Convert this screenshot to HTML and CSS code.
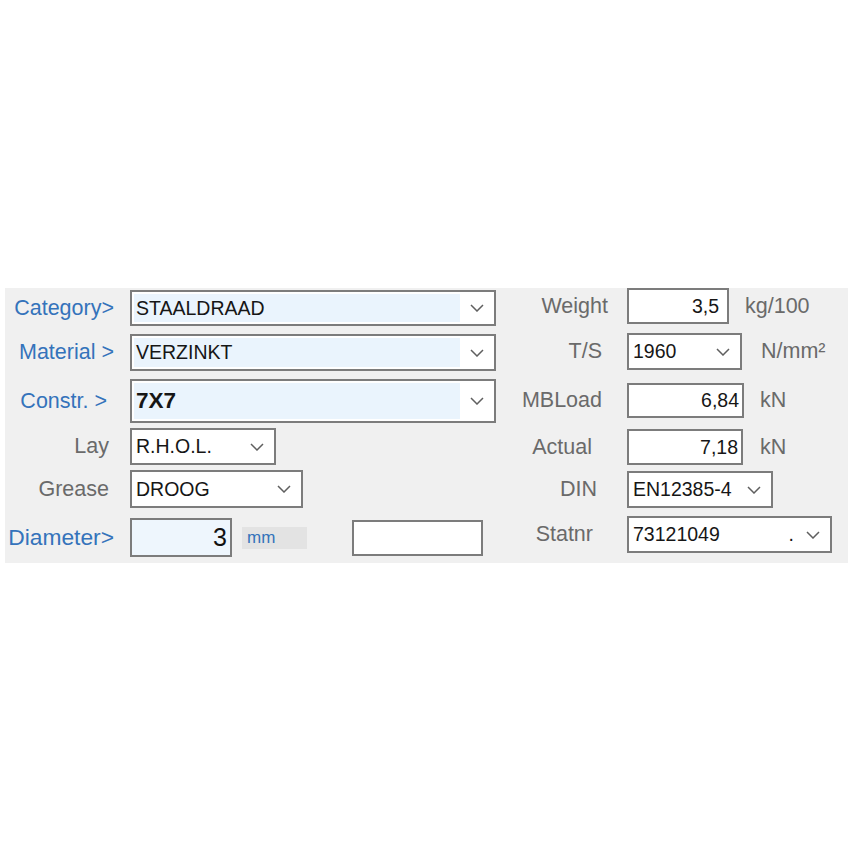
FILE: index.html
```html
<!DOCTYPE html>
<html>
<head>
<meta charset="utf-8">
<link rel="stylesheet" href="styles.css">
</head>
<body>
<div class="panel">
  <div class="lcol">
    <div class="row l1">
      <div class="lbl blue">Category&gt;</div>
      <div class="box combo wide"><div class="val hl">STAALDRAAD</div><div class="arrow"><svg width="14" height="8" viewBox="0 0 14 8"><path d="M1 1 L7 7 L13 1" fill="none" stroke="#5f5f5f" stroke-width="1.5"/></svg></div></div>
    </div>
    <div class="row l2">
      <div class="lbl blue">Material &gt;</div>
      <div class="box combo wide"><div class="val hl">VERZINKT</div><div class="arrow"><svg width="14" height="8" viewBox="0 0 14 8"><path d="M1 1 L7 7 L13 1" fill="none" stroke="#5f5f5f" stroke-width="1.5"/></svg></div></div>
    </div>
    <div class="row l3">
      <div class="lbl blue pad7">Constr. &gt;</div>
      <div class="box combo wide"><div class="val hl bold">7X7</div><div class="arrow"><svg width="14" height="8" viewBox="0 0 14 8"><path d="M1 1 L7 7 L13 1" fill="none" stroke="#5f5f5f" stroke-width="1.5"/></svg></div></div>
    </div>
    <div class="row l4">
      <div class="lbl grey pad5">Lay</div>
      <div class="box combo lay"><div class="val">R.H.O.L.</div><div class="arrow"><svg width="14" height="8" viewBox="0 0 14 8"><path d="M1 1 L7 7 L13 1" fill="none" stroke="#5f5f5f" stroke-width="1.5"/></svg></div></div>
    </div>
    <div class="row l5">
      <div class="lbl grey pad5">Grease</div>
      <div class="box combo grease"><div class="val">DROOG</div><div class="arrow"><svg width="14" height="8" viewBox="0 0 14 8"><path d="M1 1 L7 7 L13 1" fill="none" stroke="#5f5f5f" stroke-width="1.5"/></svg></div></div>
    </div>
    <div class="row l6">
      <div class="lbl blue big">Diameter&gt;</div>
      <div class="box diam">3</div>
      <div class="mm">mm</div>
      <div class="box empty"></div>
    </div>
  </div>
  <div class="rcol">
    <div class="row r1">
      <div class="rlbl">Weight</div>
      <div class="box num weight">3,5</div>
      <div class="unit u16">kg/100</div>
    </div>
    <div class="row r2">
      <div class="rlbl p6">T/S</div>
      <div class="box combo ts"><div class="val">1960</div><div class="arrow"><svg width="14" height="8" viewBox="0 0 14 8"><path d="M1 1 L7 7 L13 1" fill="none" stroke="#5f5f5f" stroke-width="1.5"/></svg></div></div>
      <div class="unit u19">N/mm²</div>
    </div>
    <div class="row r3">
      <div class="rlbl p6">MBLoad</div>
      <div class="box num mb">6,84</div>
      <div class="unit u16">kN</div>
    </div>
    <div class="row r4">
      <div class="rlbl p16">Actual</div>
      <div class="box num act">7,18</div>
      <div class="unit u17">kN</div>
    </div>
    <div class="row r5">
      <div class="rlbl p11">DIN</div>
      <div class="box combo din"><div class="val">EN12385-4</div><div class="arrow"><svg width="14" height="8" viewBox="0 0 14 8"><path d="M1 1 L7 7 L13 1" fill="none" stroke="#5f5f5f" stroke-width="1.5"/></svg></div></div>
    </div>
    <div class="row r6">
      <div class="rlbl p15">Statnr</div>
      <div class="box combo stat"><div class="val">73121049<span class="dot">.</span></div><div class="arrow"><svg width="14" height="8" viewBox="0 0 14 8"><path d="M1 1 L7 7 L13 1" fill="none" stroke="#5f5f5f" stroke-width="1.5"/></svg></div></div>
    </div>
  </div>
</div>
</body>
</html>
```
FILE: styles.css
```css
html, body { margin: 0; padding: 0; background: #ffffff; }
body { padding: 288px 0 0 5px; font-family: "Liberation Sans", Arial, sans-serif; }

.panel {
  width: 843px;
  height: 275px;
  background: #f0f0f0;
  display: flex;
}

.lcol { width: 495px; display: flex; flex-direction: column; padding-top: 2px; }
.rcol { display: flex; flex-direction: column; }

.row { display: flex; align-items: center; }

.l1 { height: 36px; }
.l2 { height: 37px; margin-top: 8px; }
.l3 { height: 44px; margin-top: 8px; }
.l4 { height: 37px; margin-top: 5px; }
.l5 { height: 38px; margin-top: 5px; }
.l6 { height: 39px; margin-top: 10px; }

.r1 { height: 36px; }
.r2 { height: 37px; margin-top: 9px; }
.r3 { height: 35px; margin-top: 13px; }
.r4 { height: 36px; margin-top: 11px; }
.r5 { height: 37px; margin-top: 6px; }
.r6 { height: 37px; margin-top: 8px; }

.lbl {
  width: 109px;
  box-sizing: border-box;
  text-align: right;
  margin-right: 16px;
  font-size: 21.5px;
  white-space: nowrap;
}
.blue { color: #3473bb; }
.grey { color: #6a6a6a; }
.big { font-size: 22.8px; }
.pad7 { padding-right: 7px; }
.pad5 { padding-right: 5px; }

.rlbl {
  width: 108px;
  box-sizing: border-box;
  text-align: right;
  margin-right: 19px;
  font-size: 21.5px;
  color: #6a6a6a;
  white-space: nowrap;
}
.p6 { padding-right: 6px; }
.p11 { padding-right: 11px; }
.p15 { padding-right: 15px; }
.p16 { padding-right: 16px; }

.box {
  box-sizing: border-box;
  border: 2px solid #7c7c7c;
  background: #ffffff;
  height: 100%;
  font-size: 19.5px;
  color: #161616;
}

.combo { display: flex; align-items: stretch; }
.combo .val {
  flex: 1;
  display: flex;
  align-items: center;
  padding-left: 4px;
  white-space: nowrap;
}
.combo .val.hl { background: #eaf4fd; margin: 2px 0 2px 2px; padding-left: 2px; }
.combo .arrow {
  width: 34px;
  display: flex;
  align-items: center;
  justify-content: center;
}
.bold { font-weight: bold; font-size: 22.5px; }

.wide { width: 366px; }
.lay { width: 146px; }
.grease { width: 173px; }
.ts { width: 115px; }
.din { width: 146px; }
.stat { width: 205px; }
.dot { margin-left: auto; margin-right: 2px; }

.diam {
  width: 102px;
  background: #eef6fd;
  display: flex;
  align-items: center;
  justify-content: flex-end;
  padding-right: 3px;
  font-size: 25px;
  color: #111111;
}
.mm {
  width: 65px;
  height: 22px;
  margin-left: 10px;
  background: #e3e3e3;
  color: #3473bb;
  font-size: 17px;
  line-height: 22px;
  padding-left: 5px;
  box-sizing: border-box;
}
.empty { width: 131px; height: 36px; margin-left: 45px; }

.num {
  display: flex;
  align-items: center;
  justify-content: flex-end;
  padding-right: 3px;
}
.weight { width: 102px; padding-right: 8px; }
.mb { width: 117px; }
.act { width: 116px; }

.unit { font-size: 21.5px; color: #6a6a6a; white-space: nowrap; }
.u16 { margin-left: 16px; }
.u17 { margin-left: 17px; }
.u19 { margin-left: 19px; }
```
